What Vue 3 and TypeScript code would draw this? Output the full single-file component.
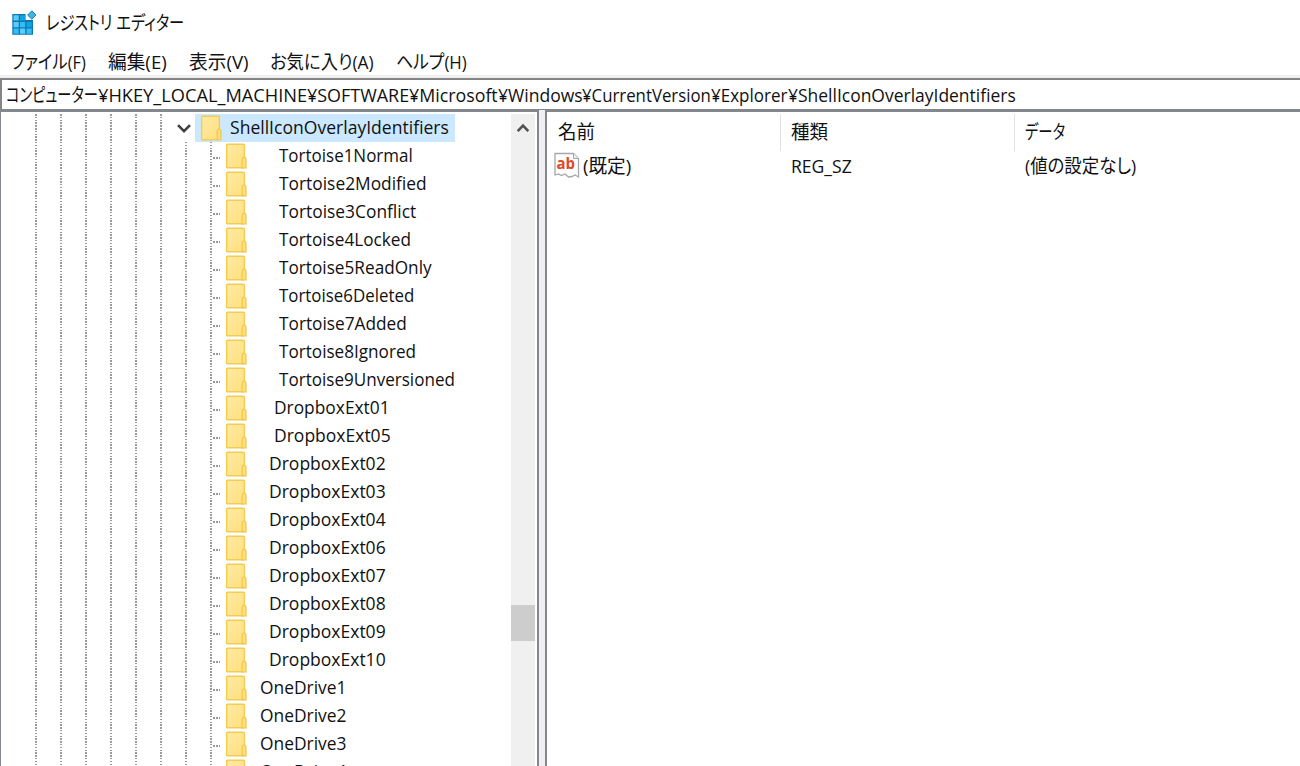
<script setup lang="ts">
import type { ObjectDirective } from 'vue'

interface TreeKey {
  name: string
  indent: number
  width: number
}

// squeezes a label to the given width in px, like the narrow UI font does
const vFit: ObjectDirective<HTMLElement, number> = {
  mounted(el, { value }) {
    const natural = el.offsetWidth
    el.style.transform = `scaleX(${value / natural})`
    el.style.marginRight = `${value - natural}px`
  },
}

const menu = [
  { label: 'ファイル(F)', width: 75 },
  { label: '編集(E)', width: 59 },
  { label: '表示(V)', width: 60 },
  { label: 'お気に入り(A)', width: 104 },
  { label: 'ヘルプ(H)', width: 71 },
]

const path = [
  { part: 'コンピューター', width: 92 },
  { part: '¥HKEY_LOCAL_MACHINE', width: 209 },
  { part: '¥SOFTWARE', width: 102 },
  { part: '¥Microsoft', width: 89 },
  { part: '¥Windows', width: 85 },
  { part: '¥CurrentVersion', width: 129 },
  { part: '¥Explorer', width: 76 },
  { part: '¥ShellIconOverlayIdentifiers', width: 228 },
]

const keys: TreeKey[] = [
  { name: 'Tortoise1Normal', indent: 278, width: 134 },
  { name: 'Tortoise2Modified', indent: 278, width: 148 },
  { name: 'Tortoise3Conflict', indent: 278, width: 137 },
  { name: 'Tortoise4Locked', indent: 278, width: 132 },
  { name: 'Tortoise5ReadOnly', indent: 278, width: 153 },
  { name: 'Tortoise6Deleted', indent: 278, width: 135 },
  { name: 'Tortoise7Added', indent: 278, width: 128 },
  { name: 'Tortoise8Ignored', indent: 278, width: 137 },
  { name: 'Tortoise9Unversioned', indent: 278, width: 176 },
  { name: 'DropboxExt01', indent: 273, width: 116 },
  { name: 'DropboxExt05', indent: 273, width: 117 },
  ...['02', '03', '04', '06', '07', '08', '09', '10'].map((n) => ({ name: 'DropboxExt' + n, indent: 268, width: 117 })),
  ...[1, 2, 3, 4].map((n) => ({ name: 'OneDrive' + n, indent: 259, width: 86 })),
]
</script>

<template>
  <div class="window">
    <svg class="defs" width="0" height="0">
      <defs>
        <linearGradient id="paper" x1="0" y1="0" x2="1" y2="1">
          <stop offset="0" stop-color="#ffeaa4" />
          <stop offset="1" stop-color="#ffe07d" />
        </linearGradient>
        <symbol id="folder" viewBox="0 0 22 26">
          <rect x="1.6" y="1.2" width="17.8" height="23.6" rx="0.8" fill="url(#paper)" stroke="#f2cc55" stroke-width="1.4" />
          <path d="M17.2 24.8v-9.2l1-1.2h1.6l1.2 1.2v9.2z" fill="#ffe07d" stroke="#f0c94f" stroke-width="1.3" />
        </symbol>
      </defs>
    </svg>

    <div class="titlebar">
      <svg class="logo" width="26" height="26" viewBox="0 0 26 26">
        <path d="M1.300 4h13.200v6h7.500v14.800H1.300z" fill="#0879b6" />
        <path d="M2.500 5.200h5.200v5.300H2.500zM2.500 12h5.200v5.200H2.500zM9 18.500h5.200v5.200H9z" fill="#5dcdf8" />
        <path d="M2.500 18.500h5.200v5.200H2.500zM9 12h5.200v5.200H9zM15.500 18.500h5.200v5.200h-5.200z" fill="#35bdf2" />
        <path d="M9 5.200h5.200v5.300H9zM15.500 12h5.200v5.200h-5.200z" fill="#12a4df" />
        <path d="M20.800 0.800l4.200 4.200-4.200 4.200-4.200-4.200z" fill="#40b4df" stroke="#1685b8" />
      </svg>
      <span v-fit="138" class="txt">レジストリ エディター</span>
    </div>

    <div class="menubar">
      <span v-for="item in menu" :key="item.label" v-fit="item.width" class="txt">{{ item.label }}</span>
    </div>

    <div class="address">
      <span v-for="item in path" :key="item.part" v-fit="item.width" class="txt">{{ item.part }}</span>
    </div>

    <div class="panes">
      <div class="tree">
        <div class="rows">
          <div class="row root">
            <i v-for="n in 6" :key="n" class="line"></i>
            <div class="toggle">
              <svg width="16" height="11" viewBox="0 0 16 11">
                <path d="M2 2.200l6 6 6-6" fill="none" stroke="#404040" stroke-width="2.600" />
              </svg>
            </div>
            <div class="selected">
              <svg class="folder" width="22" height="26"><use href="#folder" /></svg>
              <span v-fit="219" class="txt">ShellIconOverlayIdentifiers</span>
            </div>
          </div>
          <div v-for="key in keys" :key="key.name" class="row">
            <i v-for="n in 8" :key="n" class="line"></i>
            <i class="branch"></i>
            <svg class="folder" width="22" height="26"><use href="#folder" /></svg>
            <span v-fit="key.width" class="txt" :style="{ marginLeft: key.indent - 246 + 'px' }">{{ key.name }}</span>
          </div>
        </div>
        <div class="scrollbar">
          <svg width="14" height="10" viewBox="0 0 14 10">
            <path d="M1.700 8.200L7 2.700l5.300 5.500" fill="none" stroke="#505050" stroke-width="2.600" />
          </svg>
          <div class="thumb"></div>
        </div>
      </div>

      <div class="splitter"></div>

      <div class="values">
        <div class="header">
          <div class="cell name"><span v-fit="37" class="txt">名前</span></div>
          <div class="cell type"><span v-fit="37" class="txt">種類</span></div>
          <div class="cell data"><span v-fit="40" class="txt">データ</span></div>
        </div>
        <div class="value">
          <div class="cell name">
            <svg class="string" width="26" height="27" viewBox="0 0 26 27">
              <path d="M1 1.500h18.500l5 5v18.500l-3.500-2-3 1.500-3.500 0.500-3.500-3-3.500 1.500-3-1.500L1 23z" fill="#fff" stroke="#a6a6a6" stroke-width="1.300" />
              <path d="M19.500 1.500v5h5" fill="#eee" stroke="#a6a6a6" />
              <text x="2.500" y="17" textLength="18.500" lengthAdjust="spacingAndGlyphs">ab</text>
            </svg>
            <span v-fit="48" class="txt">(既定)</span>
          </div>
          <div class="cell type"><span v-fit="61" class="txt">REG_SZ</span></div>
          <div class="cell data"><span v-fit="111" class="txt">(値の設定なし)</span></div>
        </div>
      </div>
    </div>
  </div>
</template>

<style>
body {
  margin: 0;
  overflow: hidden;
}
</style>

<style scoped>
.window {
  display: flex;
  flex-direction: column;
  width: 1300px;
  height: 766px;
  overflow: hidden;
  background: #fff;
  color: #111;
  font-family: "Open Sans", "Noto Sans CJK JP", sans-serif;
  font-size: 19px;
  line-height: 28px;
}

.defs {
  position: absolute;
}

.txt {
  display: inline-block;
  flex: none;
  white-space: pre;
  transform-origin: left center;
  font-feature-settings: "palt";
}

.titlebar {
  display: flex;
  align-items: center;
  flex: none;
  height: 45px;
  padding-left: 11px;
}

.logo {
  margin-right: 9px;
}

.menubar {
  display: flex;
  align-items: center;
  gap: 22px;
  flex: none;
  box-sizing: border-box;
  height: 33px;
  padding: 3px 0 0 11px;
  border-bottom: 3px solid #f0f0f0;
}

.address {
  display: flex;
  align-items: center;
  flex: none;
  box-sizing: border-box;
  height: 32px;
  padding-left: 4px;
  border: solid #858585;
  border-width: 2px 0 1px 2px;
}

.panes {
  display: flex;
  flex: 1;
  min-height: 0;
  background: #f0f0f0;
}

.tree {
  display: flex;
  box-sizing: border-box;
  width: 539px;
  padding-top: 2px;
  border: solid #828790;
  border-width: 2px 2px 0 1px;
  background: #fff;
}

.rows {
  flex: 1;
  overflow: hidden;
}

.row {
  display: flex;
  align-items: center;
  height: 28px;
  padding-left: 34px;
}

.row .txt {
  margin-top: -2px;
}

.line {
  flex: none;
  width: 2px;
  height: 28px;
  margin-right: 23px;
  background: repeating-linear-gradient(#9a9a9a 0 1.500px, #fff 1.500px 2.800px);
}

.line:nth-of-type(8) {
  margin-right: 0;
}

.branch {
  width: 10px;
  height: 2px;
  margin: 4px 3px 0 0;
  background: repeating-linear-gradient(90deg, #fff 0 1.300px, #9a9a9a 1.300px 2.800px);
}

.folder {
  flex: none;
}

.toggle {
  display: flex;
  flex: none;
  width: 10px;
  justify-content: center;
  margin: 0 6px 0 -6px;
}

.toggle svg {
  flex: none;
}

.selected {
  display: flex;
  align-items: center;
  gap: 8px;
  box-sizing: border-box;
  width: 260px;
  height: 28px;
  padding-left: 5px;
  background: #cce8ff;
}

.scrollbar {
  display: flex;
  flex-direction: column;
  align-items: center;
  flex: none;
  width: 24px;
  margin-right: 2px;
  padding-top: 9px;
  background: #f0f0f0;
}

.thumb {
  width: 24px;
  height: 36px;
  margin-top: 472px;
  background: #cdcdcd;
}

.splitter {
  flex: none;
  width: 6px;
}

.values {
  flex: 1;
  border: solid #828790;
  border-width: 2px 0 0 2px;
  background: #fff;
}

.header,
.value {
  display: flex;
}

.header {
  padding-top: 2px;
}

.cell {
  display: flex;
  align-items: center;
  box-sizing: border-box;
}

.header .cell {
  height: 37px;
  padding: 0 0 2px 10px;
}

.header .name {
  padding-left: 11px;
}

.header .name,
.header .type {
  border-right: 1px solid #e2e2e2;
}

.name,
.type {
  width: 234px;
}

.value .cell {
  height: 28px;
  padding-left: 10px;
}

.value .txt {
  margin-top: 2px;
}

.value .name {
  gap: 3px;
  padding-left: 7px;
}

.string text {
  fill: #dc4a28;
  font: bold 16px "Open Sans", sans-serif;
}
</style>
